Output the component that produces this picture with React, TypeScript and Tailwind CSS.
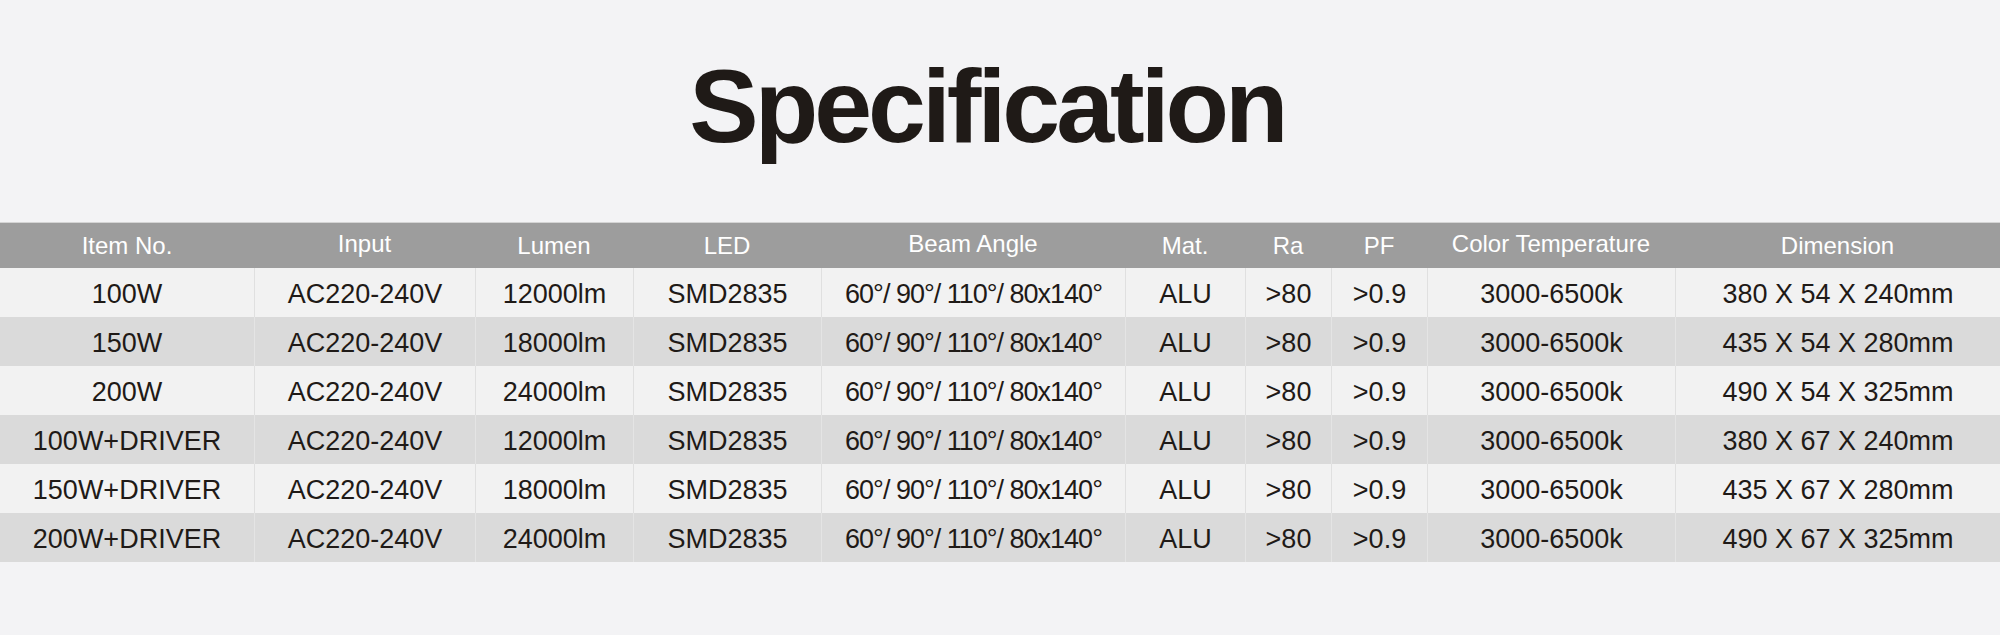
const headers: { label: string; lift?: boolean }[] = [
  { label: "Item No." },
  { label: "Input", lift: true },
  { label: "Lumen" },
  { label: "LED" },
  { label: "Beam Angle", lift: true },
  { label: "Mat." },
  { label: "Ra" },
  { label: "PF" },
  { label: "Color Temperature", lift: true },
  { label: "Dimension" },
]

const rows = [
  ["100W", "12000lm", "380 X 54 X 240mm"],
  ["150W", "18000lm", "435 X 54 X 280mm"],
  ["200W", "24000lm", "490 X 54 X 325mm"],
  ["100W+DRIVER", "12000lm", "380 X 67 X 240mm"],
  ["150W+DRIVER", "18000lm", "435 X 67 X 280mm"],
  ["200W+DRIVER", "24000lm", "490 X 67 X 325mm"],
].map(([item, lumen, dim]) => [
  item,
  "AC220-240V",
  lumen,
  "SMD2835",
  "60°/ 90°/ 110°/ 80x140°",
  "ALU",
  ">80",
  ">0.9",
  "3000-6500k",
  dim,
])

const cols =
  "grid grid-cols-[254px_221px_158px_188px_304px_120px_86px_96px_248px_325px]"

export default function App() {
  return (
    <div
      className="flex h-[635px] w-full flex-col bg-[#f3f3f5] text-[#1f1a17]"
      style={{ fontFamily: '"Liberation Sans", Arial, sans-serif' }}
    >
      <div className="mt-[54px] flex justify-center pr-[26px]">
        <h1 className="text-[104px] font-bold leading-[104px] tracking-[-4px]">
          Specification
        </h1>
      </div>

      <div className="mt-[64px]">
        <div className={`${cols} h-[46px] border-t border-[#d4d4d4] bg-[#9d9d9d] text-[24px] text-white`}>
          {headers.map((h) => (
            <div
              key={h.label}
              className={`flex items-center justify-center ${h.lift ? "pb-[4px]" : "pt-[1px]"}`}
            >
              {h.label}
            </div>
          ))}
        </div>

        {rows.map((r, i) => (
          <div
            key={i}
            className={`${cols} h-[49px] text-[27px] ${i % 2 === 0 ? "bg-[#f2f2f2]" : "bg-[#dadada]"}`}
          >
            {r.map((cell, j) => (
              <div
                key={j}
                className={`flex items-center justify-center whitespace-nowrap pt-[3px] ${
                  j === 4 ? "tracking-[-1px]" : ""
                } ${j > 0 ? (i % 2 === 0 ? "border-l border-[#e0e0e0]" : "border-l border-[#e4e4e4]") : ""}`}
              >
                {cell}
              </div>
            ))}
          </div>
        ))}
      </div>
    </div>
  )
}
